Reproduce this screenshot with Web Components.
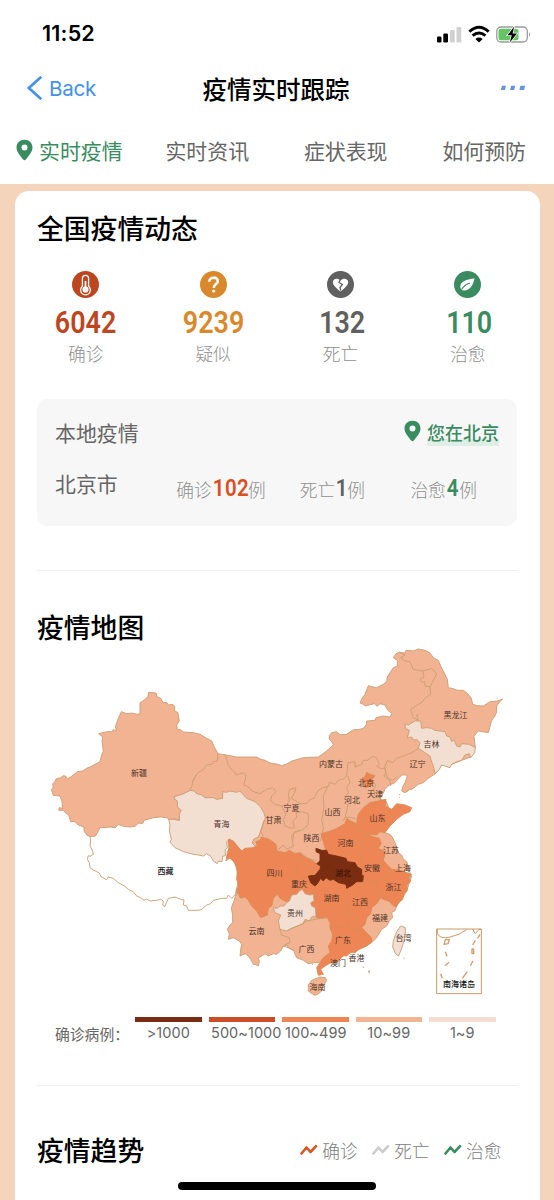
<!DOCTYPE html>
<html lang="zh-CN">
<head>
<meta charset="utf-8">
<title>疫情实时跟踪</title>
<style>
html,body{margin:0;height:1200px;overflow:hidden;background:#fff}
body{font-family:"Noto Sans CJK SC",sans-serif;color:#000}
</style>
</head>
<body>
<epidemic-app></epidemic-app>
<script>
function define(name, html) {
  const t = document.createElement('template');
  t.innerHTML = html;
  customElements.define(name, class extends HTMLElement {
    constructor() {
      super();
      this.attachShadow({mode: 'open'}).append(t.content.cloneNode(true));
    }
  });
}

define('map-pin', `<style>:host{display:block;width:17px;height:22px;color:#3a8c60;flex:none}svg{display:block}</style>
<svg width="17" height="22" viewBox="0 0 17 22"><path fill="currentColor" fill-rule="evenodd" d="M8.5 .7C3.8 .7 .5 4.1 .5 8.4c0 4.6 4.400 8.900 6.700 12.200q1.300 1.400 2.600 0C12.100 17.300 16.500 13 16.500 8.400 16.500 4.100 13.200 .7 8.500 .7Zm0 4.800a3 3 0 1 1 0 6 3 3 0 0 1 0-6Z"/></svg>`);

define('status-bar', `<style>
:host{display:flex;height:58px;padding:9px 23px 0 42px;box-sizing:border-box;align-items:center;justify-content:space-between}
b{font:600 21.500px/30px Inter,sans-serif;letter-spacing:.2px;position:relative;top:-.5px}
svg{display:block}
</style><b>11:52</b>
<svg width="95" height="20" viewBox="0 0 95 20">
<rect x="1" y="12.500" width="4.500" height="6" rx="1.200"/><rect x="7.300" y="9.500" width="4.700" height="9" rx="1.200"/>
<g fill="#d0d0d0"><rect x="14" y="6" width="4.700" height="12.500" rx="1.200"/><rect x="20.500" y="3" width="4.700" height="15.500" rx="1.200"/></g>
<g fill="none" stroke="#000" stroke-width="2.900"><path d="M33.300 7.600Q43 -1 52.700 7.600"/><path d="M36.600 11.600q6.400-5.400 12.800 0"/></g><path d="M39.400 14.900q3.600-2.800 7.200 0L43 18.600Z"/>
<rect x="60.800" y="3" width="30.500" height="15" rx="4.300" fill="#fff" stroke="#9b9b9b" stroke-width="1.300"/><rect x="62.500" y="4.700" width="20" height="11.600" rx="2.500" fill="#64c466"/><path d="M93 8q2 2.500 0 5Z" fill="#999"/>
<path d="M78.200 2.500 71.500 11.300h4.200L73.800 18.500 81 9.400h-4.400Z" stroke="#fff" stroke-width="1.500" paint-order="stroke"/>
</svg>`);

define('nav-bar', `<style>
:host{display:grid;grid-template-columns:1fr auto 1fr;height:60px;padding:0 28px 0 26px;align-items:center}
.back{display:flex;align-items:center;gap:6px;color:#4391ea;font:400 20.600px/30px Inter,sans-serif;letter-spacing:-.3px}
.back span{padding-top:2px}
h1{margin:0;font-size:24.500px;line-height:36px;font-weight:500;padding-top:1px}
.dots{justify-self:end}svg{display:block}
</style>
<div class="back"><svg width="17" height="24" viewBox="0 0 17 24"><path d="M15.300 .8 2.800 12 15.300 23.200" fill="none" stroke="currentColor" stroke-width="2.700"/></svg><span>Back</span></div>
<h1><slot></slot></h1>
<svg class="dots" width="26" height="6" viewBox="0 0 26 6" fill="#6196dc"><path d="M2 .8h4L5 5H.8ZM11.200 .8h4l-1 4.200H10ZM20.400 .8h4.700l-1 4.200h-4.700Z"/></svg>`);

define('tab-bar', `<style>
:host{display:flex;height:64px;padding:0 28px 2px 16px;align-items:center;justify-content:space-between;color:#666;font-size:20.900px;line-height:30px}
.on{display:flex;gap:6px;color:#3a8c60;align-items:center}
</style><div class="on"><map-pin></map-pin><span>实时疫情</span></div><div>实时资讯</div><div style="margin-left:12px">症状表现</div><div style="margin-left:12px">如何预防</div>`);

define('section-title', `<style>:host{display:block;font-size:26.800px;font-weight:500;line-height:48px;padding-left:22px;white-space:nowrap}</style><slot></slot>`);

define('stat-item', `<style>
:host{display:flex;flex-direction:column;align-items:center;color:var(--c)}
.n{font:600 32px/40px Roboto,sans-serif;height:40px;margin:4px 0 0;transform:scaleX(.84)}
.l{font-size:17.700px;font-weight:300;line-height:23px;color:#909090}
</style><slot name="icon"></slot><div class="n"><slot name="value"></slot></div><div class="l"><slot></slot></div>`);

define('stat-grid', `<style>
:host{display:grid;grid-template-columns:repeat(4,127.400px);padding:18.500px 0 1px 7px}svg{display:block}
</style>
<stat-item style="--c:#bc461f"><svg slot="icon" width="27" height="27"><circle cx="13.500" cy="13.500" r="13.500" fill="#bc461f"/><path d="M10.400 15.200V7.400a3.100 3.100 0 0 1 6.200 0v7.800a4.900 4.900 0 1 1-6.200 0Z" fill="none" stroke="#fff" stroke-width="1.300"/><circle cx="13.500" cy="18.500" r="3.100" fill="#fff"/><path d="M13.500 18V10" stroke="#fff" stroke-width="1.800"/></svg><span slot="value">6042</span>确诊</stat-item>
<stat-item style="--c:#d9892c"><svg slot="icon" width="27" height="27"><circle cx="13.500" cy="13.500" r="13.500" fill="#d9892c"/><path d="M9.300 10.700C9.300 5.300 17.800 5.500 17.800 10.300 17.800 13.200 13.700 12.900 13.700 17" fill="none" stroke="#fff" stroke-width="2.600"/><circle cx="13.700" cy="20" r="1.600" fill="#fff"/></svg><span slot="value">9239</span>疑似</stat-item>
<stat-item style="--c:#606060"><svg slot="icon" width="27" height="27"><circle cx="13.500" cy="13.500" r="13.500" fill="#606060"/><path d="M13.500 20.500C9 17 5.800 14 5.800 11.300c0-3.800 5-4.900 7.700-1.700 2.700-3.200 7.700-2.100 7.700 1.700 0 2.700-3.200 5.700-7.700 9.200Z" fill="#fff"/><path d="M13.300 8.500 12 11.500l3.400 2-2.400 3 .8 3" fill="none" stroke="#606060" stroke-width="1.300"/></svg><span slot="value" style="margin-left:3px">132</span>死亡</stat-item>
<stat-item style="--c:#3a8c60"><svg slot="icon" width="27" height="27"><circle cx="13.500" cy="13.500" r="13.500" fill="#3a8c60"/><path d="M20.500 7.500C12 8.300 6.500 10.500 6.300 15.500c-.1 2.300 1.200 4 3.800 4 5.700-.2 8.900-4.500 10.400-12Z" fill="#fff"/><path d="M7.500 18.500Q10.500 13.800 16 12" fill="none" stroke="#3a8c60" stroke-width="1.100"/></svg><span slot="value" style="margin-left:3px">110</span>治愈</stat-item>`);

define('case-count', `<style>
:host{display:flex;align-items:baseline;font-size:17.700px;font-weight:300;line-height:30px;color:#909090;white-space:nowrap}
b{font:600 23.800px/30px Roboto,sans-serif;color:var(--c);display:inline-block;width:var(--w)}
i{display:inline-block;font-style:normal;transform:scaleX(.86);transform-origin:0 50%;letter-spacing:.4px;padding-left:1px;position:relative;top:-.5px}
</style><slot></slot><b><i><slot name="n"></slot></i></b>例`);

define('local-panel', `<style>
:host{display:block;box-sizing:border-box;width:480px;height:127px;margin:33px 0 0 22px;padding:18px 18px 0;border-radius:10px;background:#f7f7f7;color:#666;font-size:20.900px}
.a,.b{display:flex;align-items:center;line-height:30px}
.a{justify-content:space-between}
.loc{display:flex;align-items:center;gap:6.500px;color:#3a8c60;font-size:18px;font-weight:500;line-height:27px}
.loc map-pin{margin-top:-1px}
.loc span{margin-top:2px;background:linear-gradient(transparent 20px,#dfeee6 20px)}
.b{margin-top:19px}
case-count{margin-top:8px}
.b>span{margin-top:-3px}
</style>
<div class="a"><span>本地疫情</span><div class="loc"><map-pin></map-pin><span>您在北京</span></div></div>
<div class="b"><span>北京市</span>
<case-count style="--c:#d94f20;--w:36.500px;margin-left:58.500px">确诊<span slot="n">102</span></case-count>
<case-count style="--c:#606060;--w:12px;margin-left:34px">死亡<span slot="n">1</span></case-count>
<case-count style="--c:#3a8c60;--w:13.500px;margin-left:45.500px">治愈<span slot="n">4</span></case-count></div>`);

/* Map space: three units per pixel; each group holds one region of the country. */
const labels = [['新疆',139,773],['青海',221.500,824],['内蒙古',331,763.500],['北京',366,782.500],['天津',375,793.500],['河北',352,800],['宁夏',291.500,808],['山西',332.500,812],['甘肃',273.500,820],['山东',377.500,817.500],['陕西',311.500,837.500],['河南',345.500,842.500],['江苏',391,849.500],['安徽',372,867.500],['上海',403,867.500],['四川',274.500,873],['重庆',299,884],['湖北',343,872.500],['浙江',393.500,886.500],['湖南',331.500,898],['江西',360,902],['贵州',295,912.500],['云南',256.500,930.500],['福建',380,918],['台湾',403.500,937.500],['广西',306.500,949],['广东',343,939.500],['香港',356.500,958],['澳门',338,962.500],['海南',317.500,987],['黑龙江',455.500,715],['吉林',431.500,743.500],['辽宁',417.500,764]];
const text = labels.map(([s,x,y]) => `<text x="${(x-40)*3}" y="${(y-640)*3+6.500}"${s==='湖北'?' style="fill:#2e0d03"':''}>${s}</text>`).join('');

define('china-map', `<style>
:host{display:block;height:355px;padding-left:25px}
svg{display:block;stroke:#c99d72;stroke-width:2.700;stroke-linejoin:round}
text{font:400 24px "Noto Sans CJK SC",sans-serif;fill:#4d3328;stroke:none;text-anchor:middle}
.l{fill:#f2b392}.o{fill:#ee8555;stroke:#d98c55}.p{fill:#f3ded2}.w{fill:#fff}.d{fill:#7b2d12;stroke:#7b2d12}.n{fill:none}
</style>
<svg width="470" height="355" viewBox="0 15 1410 1065">
<path class="l" d="M532 338 560 342 590 348 650 348 660 354 675 358 690 366 715 370 725 374 742 368 755 360 790 350 835 348 860 330 868 322 880 312 876 303 868 295 868 284 875 275 890 272 900 281 920 280 940 266 955 266 970 262 980 250 980 240 1005 238 1008 230 1030 225 1050 228 1055 218 1042 206 1035 192 1020 188 1012 196 1003 188 975 195 970 190 960 186 966 172 975 160 985 134 1000 138 1010 140 1030 130 1040 122 1042 108 1050 95 1060 80 1072 75 1072 58 1060 50 1068 38 1078 34 1095 36 1098 28 1120 30 1135 24 1155 28 1170 36 1180 50 1195 58 1202 75 1210 90 1222 115 1225 140 1240 143 1252 148 1270 148 1285 160 1294 172 1298 190 1312 194 1330 195 1350 182 1372 180 1388 174 1378 184 1370 195 1370 212 1365 225 1355 238 1345 275 1315 270 1302 285 1306 320 1292 348 1265 358 1235 370 1205 372 1186 398 1165 412 1150 425 1135 430 1120 442 1110 445 1095 455 1085 450 1088 438 1095 425 1100 410 1102 402 1085 402 1078 410 1065 425 1048 432 1035 445 1028 460 1020 475 1038 480 1050 510 1035 575 1050 580 1058 590 1065 605 1075 635 1085 642 1090 655 1100 662 1108 685 1090 690 1115 705 1108 725 1100 750 1085 775 1070 795 1066 808 1055 815 1058 830 1048 840 1040 855 1025 865 1010 890 995 905 970 920 850 970 840 965 822 965 805 968 790 958 770 950 765 940 762 930 745 920 742 912 730 915 722 930 710 940 700 938 685 945 675 938 665 946 655 950 658 962 655 975 645 970 640 970 632 955 625 945 616 938 600 945 602 925 605 910 598 900 580 890 565 895 568 878 562 865 570 852 578 845 578 825 574 800 582 780 590 750 600 500 440 472 446 448 480 380Z"/>
<g transform="translate(0 120)">
<path class="w" d="M150 440 150 466 152 480 150 495 158 510 160 520 150 526 145 524 142 535 148 545 150 560 162 568 178 576 182 586 200 596 205 588 220 592 235 605 255 616 265 625 280 632 290 645 302 650 312 658 320 654 330 660 350 658 362 655 370 660 368 672 374 678 380 664 385 652 405 648 425 656 432 656 430 672 440 675 445 688 475 688 485 685 500 672 512 668 520 658 545 652 560 652 565 642 575 652 586 640 595 600 590 560 566 512 560 400 385 395Z"/>
<path class="p" d="M403 346 412 344 430 338 450 328 462 330 470 338 485 342 495 350 520 350 530 355 548 352 548 332 560 334 570 330 590 334 600 330 620 352 645 362 662 378 672 396 676 410 666 440 655 468 642 474 636 486 650 500 620 508 604 510 590 492 570 474 560 482 562 500 556 506 556 524 548 526 546 542 535 540 532 548 520 540 512 526 500 518 490 525 475 522 460 520 445 516 430 512 405 500 390 484 394 475 388 450 390 430 385 412 418 418Z"/>
<path class="l" d="M326 34 348 36 352 48 362 52 370 66 380 64 385 72 398 70 404 76 404 90 414 95 418 120 410 132 412 145 422 146 430 153 460 155 480 160 500 172 515 180 522 196 534 218 532 240 520 242 516 250 500 252 490 266 476 274 468 282 458 300 456 315 450 328 430 338 412 344 403 346 402 354 412 360 412 378 424 388 418 400 418 418 400 412 390 416 385 412 365 408 340 410 312 418 308 428 296 426 285 436 270 438 250 436 235 430 226 440 210 438 195 440 180 440 172 456 165 466 150 466 142 464 132 450 132 438 115 432 105 422 92 422 86 402 76 395 70 388 56 388 58 380 68 382 66 362 60 345 40 343 34 325 40 320 38 308 44 304 48 294 62 290 70 284 78 286 82 294 92 288 105 278 112 272 128 270 140 262 150 258 180 242 184 225 190 210 186 180 188 168 176 158 200 152 215 152 220 146 230 148 226 138 234 115 244 92 260 98 276 96 290 100 300 98 300 65 312 58 324 46Z"/>
</g>
<g class="n" transform="translate(480 0)">
<path d="M76 342 84 370 94 385 104 392 108 402 130 395 138 402 135 420 130 430 148 440 155 450 180 458 200 445 218 440 228 452 215 465 212 478 225 490 245 495 262 490 268 478 265 460 270 445 288 440 284 455 274 472 288 480 300 488 318 488 332 475 342 472 355 448 368 440 385 436 388 424 405 430 415 418 430 414 440 406 442 385 444 365 465 362 465 378 485 370 490 358 502 358 520 346 530 350 538 370 530 376 545 384 555 380 558 400 565 412 578 418 592 405"/>
<path d="M382 438 370 465 372 500 365 535 370 560 362 600M245 495 258 520 250 535 255 555 275 562 284 560 278 540 290 530 288 515 308 512 326 520 324 552 305 568 282 575 278 600M444 405 450 425 440 438 445 455 435 470 445 485 436 528 430 540M436 528 455 530 475 535"/>
<path class="o" d="M485 412 495 408 500 394 510 400 525 404 516 415 522 425 512 436 495 440 490 425Z"/>
<path d="M522 425 528 435 520 445 525 465 535 470 545 475"/>
</g>
<g transform="translate(930 0)">
<path class="n" d="M148 34 165 42 152 50 165 60 180 62 190 85 218 90 245 82 260 98 248 122 240 138 242 160 225 172 218 182 182 205 190 230 205 238 200 222 206 220M218 90 222 108 210 115 215 124 224 122 226 135 240 138M206 322 185 335 160 345 140 352 128 365 112 358 104 380 108 395 102 405 120 420 122 435"/>
<path class="p" d="M165 248 175 252 195 240 212 240 215 262 230 260 245 262 255 268 270 270 285 272 290 285 300 288 305 302 312 296 320 315 330 318 335 308 358 310 376 320 374 335 362 350 358 338 345 342 335 358 320 362 305 370 300 380 275 372 268 385 256 398 250 375 244 360 240 345 225 335 205 322 210 305 200 295 192 298 185 288 172 290 178 268 166 262Z"/>
<path class="n" d="M168 452 175 448M182 446 188 442M194 450 196 448M147 462 151 460M147 470 149 469"/>
</g>
<g transform="translate(540 510)">
<path class="o" d="M25 85 40 90 52 106 65 120 75 112 98 110 112 105 108 92 120 88 125 78 145 84 158 92 168 100 170 120 195 125 208 118 225 128 240 125 252 135 275 148 290 158 288 175 275 192 265 200 270 215 285 225 282 255 272 252 258 250 250 240 245 235 238 248 225 250 212 268 200 272 190 268 180 262 172 250 160 262 155 285 145 292 142 312 122 320 110 300 95 285 85 268 75 258 62 262 50 240 56 225 50 205 52 180 45 155 30 142 22 145 18 150 22 125 28 110Z"/>
<path class="o" d="M303 68 325 62 345 55 375 38 380 22 392 30 410 38 415 10 430 -10 450 -25 475 -30 498 -35 495 -15 515 -5 530 -22 555 -18 575 -10 570 2 550 10 530 25 510 45 495 65 480 62 470 72 450 70 440 68 455 76 478 82 484 98 474 112 492 120 495 130 490 148 502 162 515 175 540 178 575 190 566 200 572 212 560 222 562 238 552 248 548 265 535 275 528 288 515 280 510 272 490 265 482 260 470 278 455 290 452 308 440 320 435 340 425 350 440 365 455 380 455 392 440 405 420 412 405 425 392 422 380 435 370 434 350 455 330 456 315 465 302 475 310 490 295 493 290 470 300 455 310 440 330 425 325 405 335 390 338 370 330 350 330 335 322 320 302 322 290 320 285 300 275 280 282 260 285 225 265 200 318 120Z"/>
<path class="n" style="stroke:#d98c55" d="M240 125 245 145 232 158 235 182 215 198 215 225 235 232M430 60 440 75 425 85 430 105 415 115 425 130 420 150 428 175 432 205 450 210 470 215 500 190 515 178M470 215 475 240 490 265M385 230 380 265 388 300 385 345 355 350 330 345M385 345 400 355 425 350M410 38 415 50 440 70"/>
<path class="p" d="M160 290 172 292 180 285 192 285 200 275 208 270 215 252 230 250 238 240 247 235 255 248 270 252 280 250 282 270 272 275 275 285 286 290 288 315 275 318 268 330 255 325 248 340 240 342 225 348 215 352 200 360 180 355 175 330 182 312 165 305Z"/>
<path class="n" d="M180 355 185 372 208 380 210 395 195 400 205 410 190 405M200 360 215 352 240 342 260 330 302 322 322 320M52 235 62 262M205 410 222 418M170 120 190 102 200 115 220 105 215 75 225 62 240 58M130 75 122 60 132 28M240 125 260 140 290 150"/>
<path class="d" d="M288 112 305 118 320 118 325 130 350 135 378 142 382 152 405 155 412 168 425 175 425 190 430 195 428 212 410 212 398 222 380 232 378 220 355 215 340 205 330 208 318 200 310 210 302 202 292 218 285 225 272 215 265 195 285 193 300 175 302 165 290 158 300 150 300 128 288 122Z"/>
<path class="p" d="M542 345 556 350 556 368 552 390 545 412 536 435 526 428 518 408 520 390 530 362Z"/>
<path class="l" d="M300 498 316 500 320 508 310 525 305 540 290 552 282 552 265 540 265 522 275 508Z"/>
<path class="n" d="M506 395 508 397M550 440 554 443M276 458 278 462M428 468 432 470M444 482 449 479 448 484ZM562 200 575 196M550 180 560 188 572 185"/>
</g>
<g class="n" transform="translate(930 450)">
<path d="M260 414H394V608H260ZM262 414 262 428Q272 446 300 438 330 432 350 416M368 414 376 428 386 416 394 415" stroke="#c98c55"/>
<path d="M286 446 298 446 294 458 282 460ZM286 482 291 496M285 524 297 514M272 548 277 562M390 430 383 442M376 448 368 462M366 474H371V488H366ZM369 510 361 524M352 542 337 562" stroke-width="4" stroke="#d39b6c"/>
</g>
${text}
<g><text x="376.500" y="700" style="fill:#111;font-weight:500">西藏</text><text x="1257" y="1039" style="fill:#111;font-weight:500">南海诸岛</text></g>
</svg>`);

define('map-legend', `<style>
:host{display:flex;align-items:flex-start;padding:16px 0 0 40px;height:51px;color:#666}
.t{width:80px;font-size:14.800px;line-height:24px;margin-top:5px;white-space:nowrap}
ul{list-style:none;margin:0;padding:0;display:grid;grid-template-columns:repeat(5,66.500px);column-gap:7px}
li{display:flex;flex-direction:column;align-items:center;border-top:5px solid var(--c);font:400 14.500px/21px Inter,sans-serif;letter-spacing:.05px;white-space:nowrap}
</style><div class="t">确诊病例：</div>
<ul><li style="--c:#7b2d12">&gt;1000</li><li style="--c:#cb4c27"><span style="margin-left:9px">500~1000</span></li><li style="--c:#ee8555"><span style="margin-left:1px">100~499</span></li><li style="--c:#f2b392">10~99</li><li style="--c:#f3ded2">1~9</li></ul>`);

define('trend-key', `<style>:host{display:flex;align-items:center;gap:4px;font-size:17.700px;font-weight:300;line-height:26px;color:#808080}svg{display:block}</style>
<svg width="18" height="12" viewBox="0 0 18 12"><path d="M1.500 9.500 6.500 3.500 10.500 8 16 2.200" fill="none" stroke="var(--c)" stroke-width="2.600" stroke-linecap="round" stroke-linejoin="round"/></svg><slot></slot>`);

define('rule-line', `<style>:host{display:block;height:1px;margin:0 22px;background:#f0f0f0}</style>`);

define('epidemic-app', `<style>
:host{display:flex;flex-direction:column;position:relative;height:1200px;overflow:hidden;background:#fff}
main{flex:1;min-height:0;background:#f5d4bc;padding:7px 14.500px 0 15px}
.card{height:1040px;background:#fff;border-radius:14px;padding-top:13px;box-sizing:border-box}
.trend{display:flex;justify-content:space-between;align-items:center;margin-top:40px;padding-right:38px}
.keys{display:flex;gap:14.500px}
.home{position:absolute;left:178px;top:1182px;width:198px;height:7.500px;border-radius:4px;background:#000}
</style>
<status-bar></status-bar><nav-bar>疫情实时跟踪</nav-bar><tab-bar></tab-bar>
<main><div class="card">
<section-title>全国疫情动态</section-title>
<stat-grid></stat-grid>
<local-panel></local-panel>
<rule-line style="margin-top:44px"></rule-line>
<section-title style="margin-top:32px;height:43px">疫情地图</section-title>
<china-map></china-map>
<map-legend></map-legend>
<rule-line style="margin-top:17px"></rule-line>
<div class="trend"><section-title>疫情趋势</section-title><div class="keys"><trend-key style="--c:#dc5424">确诊</trend-key><trend-key style="--c:#ccc">死亡</trend-key><trend-key style="--c:#3a8c60">治愈</trend-key></div></div>
</div></main>
<div class="home"></div>`);
</script>
</body>
</html>
